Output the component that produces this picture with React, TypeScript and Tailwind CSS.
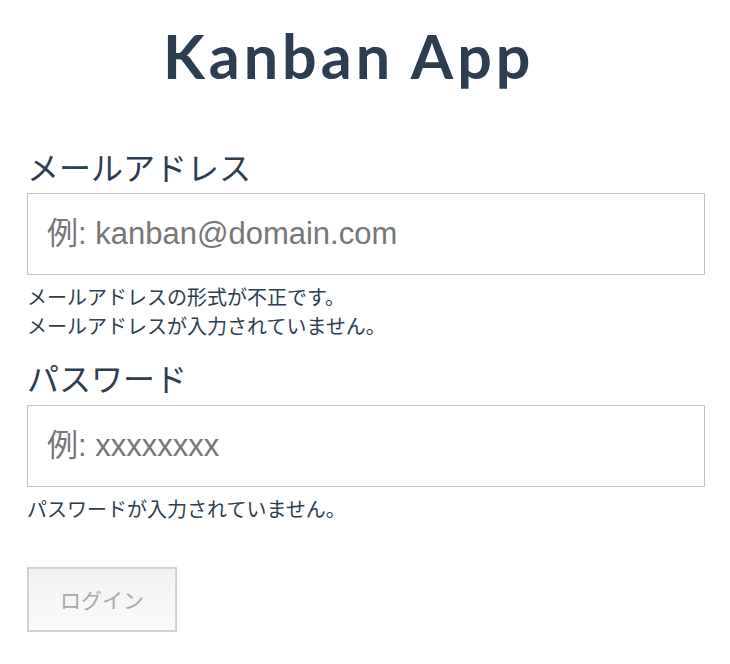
export default function App() {
  return (
    <div className="min-h-screen bg-white text-[#2c3e50] font-['Lato','Noto_Sans_CJK_JP',sans-serif]">
      <div className="w-[678px] ml-[27px] pt-[18px]">
        <h1 className="pl-[136px] text-[61px] leading-[76px] font-bold tracking-[4px]">Kanban App</h1>
        <form className="flex flex-col mt-[50px]">
          <label className="text-[32px] leading-[44px] font-['Noto_Sans_CJK_JP',sans-serif]">メールアドレス</label>
          <input
            type="text"
            placeholder="例: kanban@domain.com"
            className="mt-[5px] h-[82px] border border-[#c2c2c2] px-[19px] text-[31px] font-['Liberation_Sans','Noto_Sans_CJK_JP',sans-serif] placeholder:text-[#777] outline-none"
          />
          <div className="mt-[7px] text-[20px] leading-[29px] font-['Noto_Sans_CJK_JP',sans-serif]">
            <p>メールアドレスの形式が不正です。</p>
            <p>メールアドレスが入力されていません。</p>
          </div>
          <label className="mt-[15px] text-[32px] leading-[44px] font-['Noto_Sans_CJK_JP',sans-serif]">パスワード</label>
          <input
            type="password"
            placeholder="例: xxxxxxxx"
            className="mt-[6px] h-[82px] border border-[#c2c2c2] px-[19px] text-[31px] font-['Liberation_Sans','Noto_Sans_CJK_JP',sans-serif] placeholder:text-[#777] outline-none"
          />
          <p className="mt-[7px] text-[20px] leading-[29px] font-['Noto_Sans_CJK_JP',sans-serif]">パスワードが入力されていません。</p>
          <button
            type="submit"
            disabled
            className="mt-[44px] w-[150px] h-[65px] border-2 border-[#d3d3d3] bg-gradient-to-b from-[#f1f1f1] to-[#fafafa] text-[21px] text-[#a9a9a9] font-['Noto_Sans_CJK_JP',sans-serif]"
          >
            ログイン
          </button>
        </form>
      </div>
    </div>
  );
}
